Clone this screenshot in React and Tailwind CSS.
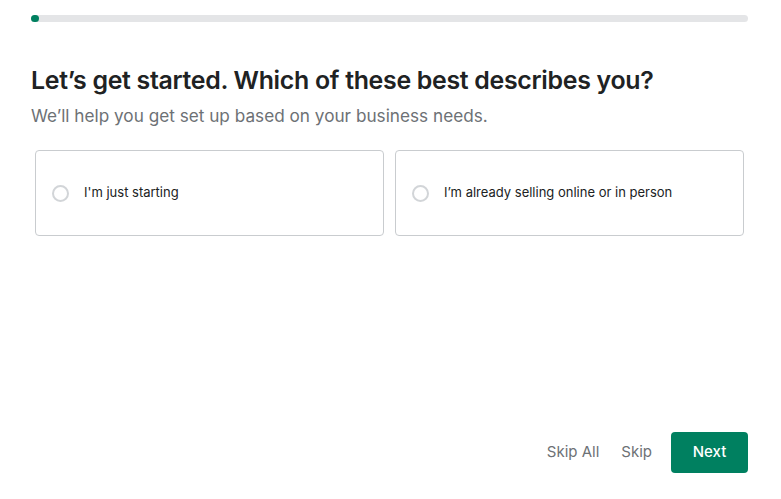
import { useState } from "react";

const options = [
  { id: "start", label: "I'm just starting" },
  { id: "selling", label: "I’m already selling online or in person" },
];

export default function App() {
  const [picked, setPicked] = useState(null);

  return (
    <div className="flex h-[499px] w-[781px] flex-col bg-white pl-[31px] pr-[33px] font-['Inter',sans-serif] text-[#202223]">
      {/* progress */}
      <div className="mt-[15px] h-[7px] w-full rounded-full bg-[#e4e5e7]">
        <div className="h-full w-[8px] rounded-full bg-[#008060]" />
      </div>

      <h1 className="mt-[42px] text-[24.9px] font-semibold leading-[32px] tracking-[-0.3px]">
        Let’s get started. Which of these best describes you?
      </h1>
      <p className="mt-[8px] text-[17.2px] leading-[24px] text-[#6d7175]">
        We’ll help you get set up based on your business needs.
      </p>

      {/* options */}
      <div className="mt-[22px] grid grid-cols-2 gap-[11px] px-[4px]">
        {options.map((o) => (
          <button
            key={o.id}
            onClick={() => setPicked(o.id)}
            className="flex h-[86px] items-center gap-[15px] rounded-[4px] border border-[#c9cccf] pl-[16px] text-left"
          >
            <span
              className={
                picked === o.id
                  ? "h-[17px] w-[17px] rounded-full border-[5px] border-[#008060]"
                  : "h-[17px] w-[17px] rounded-full border-2 border-[#d2d5d8]"
              }
            />
            <span className="text-[13px] text-[#202223]">{o.label}</span>
          </button>
        ))}
      </div>

      {/* footer */}
      <div className="mt-auto mb-[26px] flex items-center justify-end">
        <button className="text-[15px] text-[#6d7175]">Skip All</button>
        <button className="ml-[22px] text-[15px] text-[#6d7175]">Skip</button>
        <button className="ml-[19px] h-[41px] w-[77px] rounded-[4px] bg-[#008060] text-[15px] font-medium text-white">
          Next
        </button>
      </div>
    </div>
  );
}
